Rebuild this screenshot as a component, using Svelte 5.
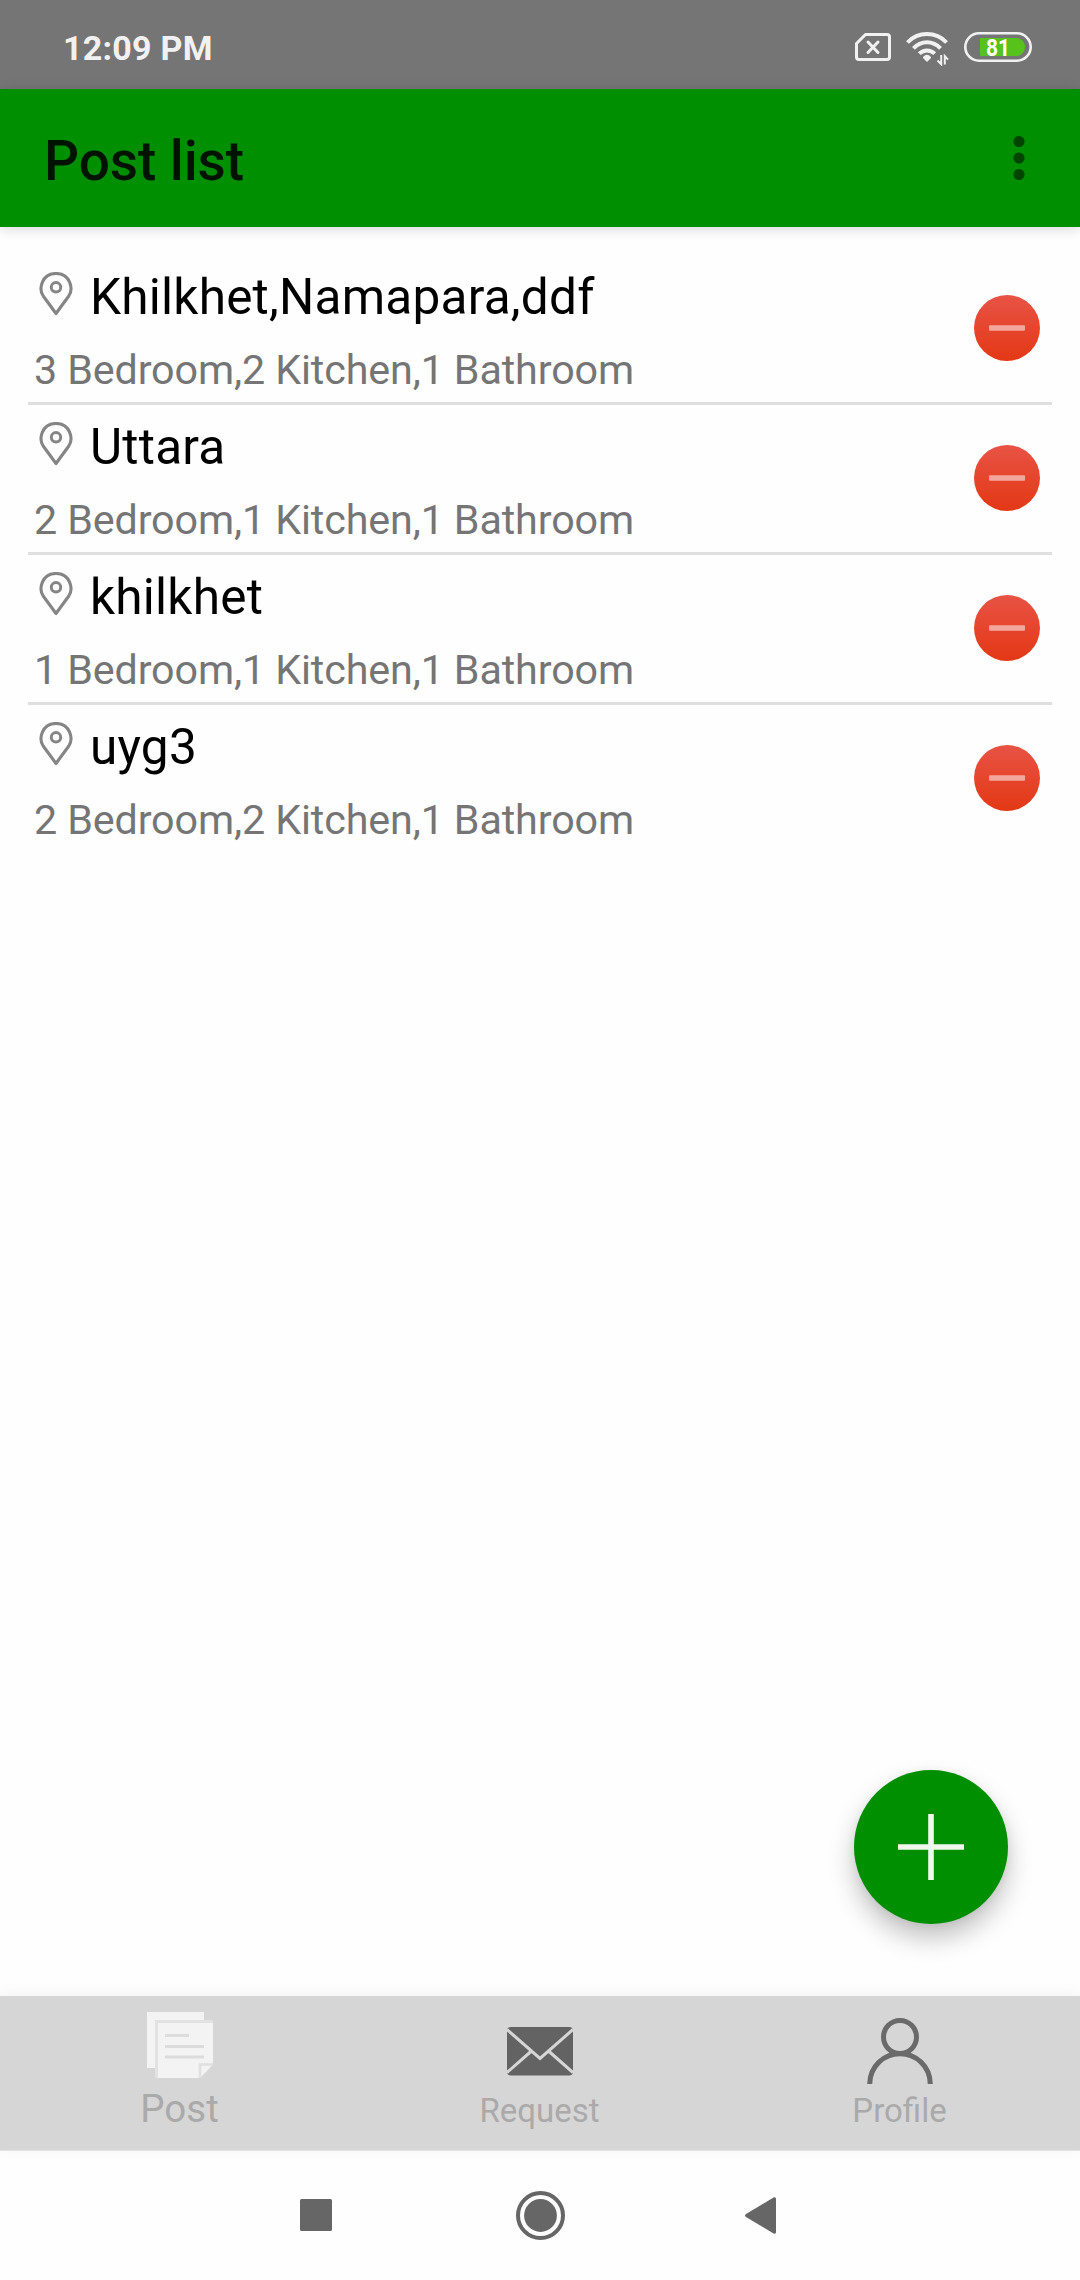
<script>
  const posts = [
    { place: 'Khilkhet,Namapara,ddf', detail: '3 Bedroom,2 Kitchen,1 Bathroom' },
    { place: 'Uttara', detail: '2 Bedroom,1 Kitchen,1 Bathroom' },
    { place: 'khilkhet', detail: '1 Bedroom,1 Kitchen,1 Bathroom' },
    { place: 'uyg3', detail: '2 Bedroom,2 Kitchen,1 Bathroom' }
  ];
</script>

<div class="screen">
  <div class="status">
    <span class="clock">12:09 PM</span>
    <svg class="status-icons" width="180" height="36" viewBox="0 0 180 36">
      <path d="M10.500 4.500H32a2.500 2.500 0 0 1 2.500 2.500V27a2.500 2.500 0 0 1-2.500 2.500H4A2.500 2.500 0 0 1 1.500 27V13.500Z" fill="none" stroke="#f1f1f1" stroke-width="3" stroke-linejoin="round" />
      <path d="M13 12L23 22.500M23 12L13 22.500" stroke="#f1f1f1" stroke-width="3" stroke-linecap="round" />
      <g fill="none" stroke="#f1f1f1" stroke-width="4">
        <path d="M52.500 12.500C63 1.300 81 1.300 91.500 12.500" />
        <path d="M58.500 18.300C66 10.100 78 10.100 85.500 18.300" />
        <path d="M64.300 23.700C68.600 19.300 75.400 19.300 79.700 23.700" />
      </g>
      <path d="M68 27Q72 22.500 76 27V28L72 32L68 28Z" fill="#f1f1f1" />
      <path d="M86.200 25V34.200L82.500 30.500M89.800 34.500V26.200L93 29.700" fill="none" stroke="#f1f1f1" stroke-width="2" />
      <rect x="110.300" y="3.300" width="65.400" height="27.400" rx="13.700" fill="none" stroke="#f1f1f1" stroke-width="2.600" />
      <path d="M126 8H162.700a9.200 9.200 0 0 1 0 18H126Q125 26 125 25V9Q125 8 126 8Z" fill="#57c21b" />
      <text x="131" y="25.800" class="charge" textLength="24" lengthAdjust="spacingAndGlyphs">81</text>
    </svg>
  </div>

  <header class="appbar">
    <h1>Post list</h1>
    <svg width="12" height="46" viewBox="0 0 12 46">
      <g fill="#004400">
        <circle cx="6" cy="6.500" r="5.600" />
        <circle cx="6" cy="23" r="5.600" />
        <circle cx="6" cy="39.500" r="5.600" />
      </g>
    </svg>
  </header>

  <main>
    <ul>
      {#each posts as post}
        <li>
          <div class="info">
            <div class="place">
              <svg width="44" height="44" viewBox="0 0 44 44">
                <path d="M22 41.500L9.200 24C4.500 17 7.500 1.500 22 1.500S39.500 17 34.800 24Z" fill="none" stroke="#858585" stroke-width="3.100" stroke-linejoin="round" />
                <circle cx="22" cy="15.300" r="4.700" fill="none" stroke="#858585" stroke-width="3" />
              </svg>
              <span>{post.place}</span>
            </div>
            <div class="detail">{post.detail}</div>
          </div>
          <svg class="remove" width="66" height="66" viewBox="0 0 66 66">
            <defs>
              <linearGradient id="red" x1="0" y1="0" x2="0" y2="1">
                <stop offset="0" stop-color="#e85345" />
                <stop offset="1" stop-color="#e33815" />
              </linearGradient>
            </defs>
            <circle cx="33" cy="33" r="33" fill="url(#red)" />
            <rect x="15" y="30.200" width="36" height="5.600" rx="1" fill="#f3a69c" />
          </svg>
        </li>
      {/each}
    </ul>
    <div class="fab">
      <svg width="66" height="66" viewBox="0 0 66 66">
        <path d="M33 0V66M0 33H66" stroke="#eff7ef" stroke-width="5.600" />
      </svg>
    </div>
  </main>

  <nav class="tabs">
    <div class="tab active">
      <svg width="66" height="66" viewBox="0 0 66 66">
        <path d="M0 0H57V8H9V56H0Z" fill="#f3f3f3" />
        <path d="M9.500 66V9.500H66" fill="none" stroke="#e2e2e2" stroke-width="3" />
        <path d="M11 11H66V52L53 66H11Z" fill="#f3f3f3" />
        <path d="M66 52.500H53V66" fill="#f3f3f3" stroke="#e0e0e0" stroke-width="2.600" />
        <path d="M66 54V66H54Z" fill="#d6d6d6" />
        <path d="M18 23.500H42M18 34.500H57M18 45H57" stroke="#dcdcdc" stroke-width="3" />
      </svg>
      <span>Post</span>
    </div>
    <div class="tab">
      <svg width="66" height="66" viewBox="0 0 66 66">
        <rect x="0" y="9" width="66" height="48.500" rx="4" fill="#636363" />
        <path d="M0 11.500L33 40.500L66 11.500M0 54.500L24.500 33M66 54.500L41.500 33" fill="none" stroke="#d6d6d6" stroke-width="3" />
      </svg>
      <span>Request</span>
    </div>
    <div class="tab">
      <svg width="66" height="66" viewBox="0 0 66 66">
        <g fill="none" stroke="#6a6a6a" stroke-width="5">
          <circle cx="33" cy="19" r="16.500" />
          <path d="M2.700 66C3 48 17 35.800 33 35.800S63 48 63.300 66" />
        </g>
      </svg>
      <span>Profile</span>
    </div>
  </nav>

  <div class="system">
    <svg width="476" height="50" viewBox="0 0 476 50">
      <g fill="#666">
        <rect x="0" y="8" width="32" height="32" rx="1.500" />
        <circle cx="240.500" cy="24.500" r="16.400" />
        <path d="M446 23L473.500 6.500Q476 5.500 476 8V41Q476 43.500 473.500 42.500L446 26Q444 24.500 446 23Z" />
      </g>
      <circle cx="240.500" cy="24.500" r="22.500" fill="none" stroke="#666" stroke-width="4" />
    </svg>
  </div>
</div>

<style>
  :global(body) {
    margin: 0;
  }
  .screen {
    width: 1080px;
    height: 2280px;
    display: flex;
    flex-direction: column;
    background: #fefefe;
    font-family: Roboto, sans-serif;
    overflow: hidden;
  }
  svg {
    display: block;
    flex: none;
  }
  .status {
    box-sizing: border-box;
    height: 89px;
    background: #757575;
    display: flex;
    justify-content: space-between;
    align-items: flex-start;
    padding: 30px 45px 0 63px;
  }
  .clock {
    color: #f1f1f1;
    font-size: 34px;
    line-height: 36px;
    font-weight: 700;
    letter-spacing: 0.250px;
  }
  .charge {
    font-family: Roboto, sans-serif;
    font-size: 24.500px;
    font-weight: 700;
    fill: #fff;
  }
  .appbar {
    box-sizing: border-box;
    height: 138px;
    background: #008f00;
    box-shadow: 0 2px 12px rgba(0, 0, 0, 0.15);
    display: flex;
    justify-content: space-between;
    align-items: center;
    padding: 0 55px 0 44px;
    z-index: 1;
  }
  h1 {
    margin: 6px 0 0;
    font-size: 55px;
    line-height: 64px;
    font-weight: 500;
    letter-spacing: -0.100px;
    color: #001300;
  }
  main {
    flex: 1;
    display: flex;
    flex-direction: column;
    justify-content: space-between;
    padding-top: 28px;
  }
  ul {
    margin: 0 28px;
    padding: 0;
    list-style: none;
  }
  li {
    box-sizing: border-box;
    height: 150px;
    border-bottom: 3px solid #dfdfdf;
    padding: 0 12px 0 6px;
    display: flex;
    justify-content: space-between;
  }
  li:last-child {
    border-color: transparent;
  }
  .place {
    display: flex;
    gap: 12px;
    padding-top: 13px;
    font-size: 49.500px;
    line-height: 58px;
    letter-spacing: 0.230px;
    color: #000;
  }
  .place svg {
    margin-top: 4px;
  }
  .detail {
    margin-top: 20px;
    font-size: 41.250px;
    line-height: 48px;
    letter-spacing: -0.120px;
    color: #757575;
  }
  .remove {
    margin-top: 40px;
  }
  .fab {
    align-self: flex-end;
    width: 154px;
    height: 154px;
    margin: 0 72px 72px 0;
    border-radius: 50%;
    background: #008f00;
    box-shadow: 0 14px 26px rgba(0, 0, 0, 0.24), 0 2px 10px rgba(0, 0, 0, 0.06);
    display: grid;
    place-items: center;
  }
  .tabs {
    height: 154px;
    background: #d6d6d6;
    box-shadow: 0 -2px 14px rgba(0, 0, 0, 0.05);
    border-bottom: 1px solid #e3e3e3;
    display: grid;
    grid-template-columns: repeat(3, 1fr);
  }
  .tab {
    display: flex;
    flex-direction: column;
    align-items: center;
    padding-top: 22px;
    font-size: 33px;
    line-height: 40px;
    color: #aaa;
  }
  .tab span {
    margin: 7px 1px 0 0;
  }
  .active {
    padding-top: 16px;
    font-size: 38.500px;
  }
  .active span {
    margin-top: 11px;
  }
  .system {
    height: 129px;
    display: flex;
    padding: 40px 0 0 300px;
    box-sizing: border-box;
  }
</style>
